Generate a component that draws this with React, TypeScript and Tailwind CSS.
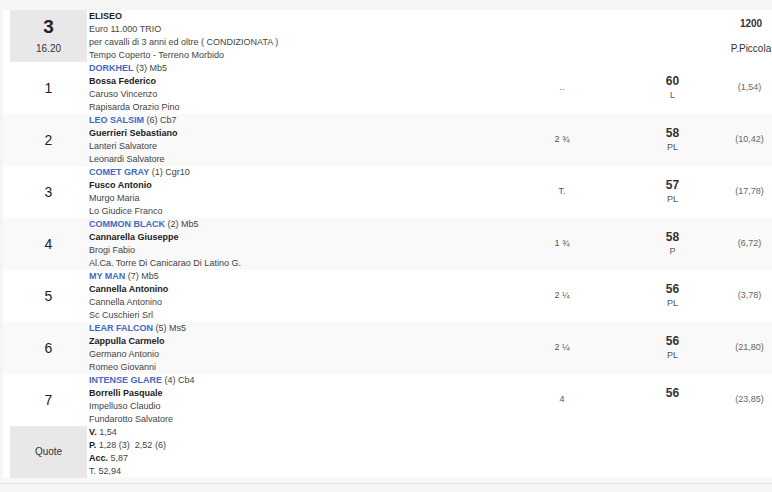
import React from "react";

type Runner = {
  pos: number;
  horse: string;
  extra: string;
  jockey: string;
  trainer: string;
  owner: string;
  dist: string;
  weight: string;
  tag: string;
  odds: string;
};

const runners: Runner[] = [
  { pos: 1, horse: "DORKHEL", extra: "(3) Mb5", jockey: "Bossa Federico", trainer: "Caruso Vincenzo", owner: "Rapisarda Orazio Pino", dist: "..", weight: "60", tag: "L", odds: "(1,54)" },
  { pos: 2, horse: "LEO SALSIM", extra: "(6) Cb7", jockey: "Guerrieri Sebastiano", trainer: "Lanteri Salvatore", owner: "Leonardi Salvatore", dist: "2 ¾", weight: "58", tag: "PL", odds: "(10,42)" },
  { pos: 3, horse: "COMET GRAY", extra: "(1) Cgr10", jockey: "Fusco Antonio", trainer: "Murgo Maria", owner: "Lo Giudice Franco", dist: "T.", weight: "57", tag: "PL", odds: "(17,78)" },
  { pos: 4, horse: "COMMON BLACK", extra: "(2) Mb5", jockey: "Cannarella Giuseppe", trainer: "Brogi Fabio", owner: "Al.Ca. Torre Di Canicarao Di Latino G.", dist: "1 ¾", weight: "58", tag: "P", odds: "(6,72)" },
  { pos: 5, horse: "MY MAN", extra: "(7) Mb5", jockey: "Cannella Antonino", trainer: "Cannella Antonino", owner: "Sc Cuschieri Srl", dist: "2 ¼", weight: "56", tag: "PL", odds: "(3,78)" },
  { pos: 6, horse: "LEAR FALCON", extra: "(5) Ms5", jockey: "Zappulla Carmelo", trainer: "Germano Antonio", owner: "Romeo Giovanni", dist: "2 ¼", weight: "56", tag: "PL", odds: "(21,80)" },
  { pos: 7, horse: "INTENSE GLARE", extra: "(4) Cb4", jockey: "Borrelli Pasquale", trainer: "Impelluso Claudio", owner: "Fundarotto Salvatore", dist: "4", weight: "56", tag: "", odds: "(23,85)" },
];

function RunnerRow({ r, alt }: { r: Runner; alt: boolean }) {
  return (
    <div className={`flex pl-[7px] ${alt ? "bg-[#f9f9f9]" : "bg-white"}`}>
      <div className="flex w-[77px] shrink-0 items-center justify-center text-[14px] text-[#222]">{r.pos}</div>
      <div className="w-[433px] shrink-0 pl-[2px] text-[9px] leading-[13px] text-[#444]">
        <div>
          <span className="font-bold text-[#4169c8]">{r.horse}</span> {r.extra}
        </div>
        <div className="font-bold text-[#222]">{r.jockey}</div>
        <div>{r.trainer}</div>
        <div>{r.owner}</div>
      </div>
      <div className="flex w-[84px] shrink-0 items-center justify-center text-[9px] text-[#555]">{r.dist}</div>
      <div className="flex w-[125px] shrink-0 flex-col items-center justify-center pl-[12px]">
        <div className="text-[12px] font-bold leading-[15px] text-[#333]">{r.weight}</div>
        <div className="text-[9px] leading-[13px] text-[#555]">{r.tag || "\u00a0"}</div>
      </div>
      <div className="flex w-[44px] shrink-0 items-center justify-center pr-[3px] text-[9px] text-[#666]">{r.odds}</div>
    </div>
  );
}

export default function App() {
  return (
    <div className="min-h-[492px] bg-[#f5f5f5] pt-[10px] font-['Liberation_Sans',Arial,sans-serif]">
      <div className="ml-[3px] overflow-hidden bg-white">
        {/* race header */}
        <div className="flex pl-[7px]">
          <div className="flex w-[77px] shrink-0 flex-col items-center bg-[#e8e8e8] pt-[6px]">
            <div className="text-[19px] font-bold leading-[22px] text-[#222]">3</div>
            <div className="mt-[4px] text-[10px] leading-[13px] text-[#333]">16.20</div>
          </div>
          <div className="w-[433px] shrink-0 pl-[2px] text-[9px] leading-[13px] text-[#444]">
            <div className="font-bold text-[#222]">ELISEO</div>
            <div>Euro 11.000 TRIO</div>
            <div>per cavalli di 3 anni ed oltre ( CONDIZIONATA )</div>
            <div>Tempo Coperto - Terreno Morbido</div>
          </div>
          <div className="w-[84px] shrink-0" />
          <div className="w-[125px] shrink-0" />
          <div className="flex w-[44px] shrink-0 flex-col items-center pt-[7px]">
            <div className="text-[10px] font-bold leading-[13px] text-[#333]">1200</div>
            <div className="mt-[12px] whitespace-nowrap text-[10px] leading-[13px] text-[#333]">P.Piccola</div>
          </div>
        </div>

        {runners.map((r, i) => (
          <RunnerRow key={r.pos} r={r} alt={i % 2 === 1} />
        ))}

        {/* odds summary */}
        <div className="flex pl-[7px]">
          <div className="flex w-[77px] shrink-0 items-center justify-center bg-[#e8e8e8] pb-[2px] text-[10px] text-[#333]">Quote</div>
          <div className="pl-[2px] text-[9px] leading-[13px] text-[#444]">
            <div>
              <span className="font-bold text-[#222]">V.</span> 1,54
            </div>
            <div>
              <span className="font-bold text-[#222]">P.</span> 1,28 (3)&nbsp; 2,52 (6)
            </div>
            <div>
              <span className="font-bold text-[#222]">Acc.</span> 5,87
            </div>
            <div>T. 52,94</div>
          </div>
        </div>
      </div>
      <div className="ml-[3px] h-[5px] bg-[#f7f7f7]" />
      <div className="h-px bg-[#e2e2e2]" />
    </div>
  );
}
